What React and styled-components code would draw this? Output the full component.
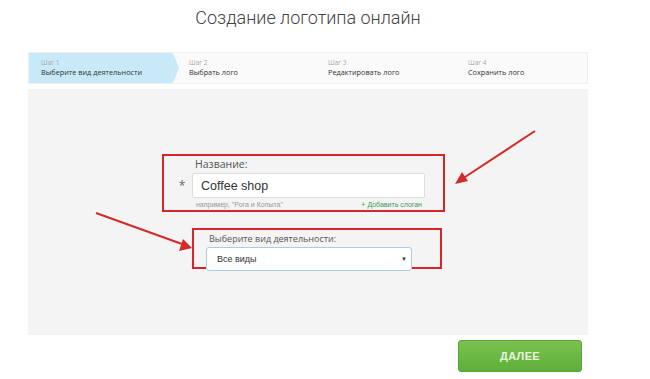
import React from "react";
import styled, { createGlobalStyle } from "styled-components";

const Global = createGlobalStyle`
  html, body { margin: 0; padding: 0; background: #fff; }
  body { font-family: "Open Sans", "Liberation Sans", Arial, sans-serif; color: #444; }
  * { box-sizing: border-box; }
`;

const Page = styled.div`
  position: relative;
  width: 650px;
  height: 379px;
  overflow: hidden;
`;

const Wrap = styled.div`
  width: 560px;
  margin-left: 28px;
  display: flex;
  flex-direction: column;
`;

const Title = styled.h1`
  margin: 7px 0 0;
  height: 45px;
  text-align: center;
  font-family: Roboto, "Open Sans", sans-serif;
  font-weight: 300;
  font-size: 18px;
  color: #444;
`;

const Steps = styled.div`
  display: grid;
  grid-template-columns: 144px 143px 140px 1fr;
  height: 32px;
  background: #fafafa;
  border: 1px solid #f0f0f0;
`;

const Step = styled.div`
  position: relative;
  padding: 6px 0 0 ${(p) => p.$pad}px;
  background: ${(p) => (p.$active ? "#c8eaf8" : "transparent")};
  ${(p) =>
    p.$active &&
    `
    &::after {
      content: "";
      position: absolute;
      right: -6px;
      top: 0;
      border-top: 15px solid transparent;
      border-bottom: 15px solid transparent;
      border-left: 6px solid #c8eaf8;
    }
  `}
`;

const StepNum = styled.div`
  font-size: 6.5px;
  color: #a8a8a8;
  line-height: 8px;
`;

const StepLabel = styled.div`
  font-size: 7.3px;
  color: #333;
  line-height: 11px;
  white-space: nowrap;
`;

const Panel = styled.div`
  margin-top: 5px;
  height: 246px;
  background: #f4f4f4;
  display: flex;
  flex-direction: column;
  padding-top: 65px;
`;

const RedBox = styled.div`
  border: 2px solid #d6262c;
  margin-left: ${(p) => p.$left}px;
  width: ${(p) => p.$w}px;
  height: ${(p) => p.$h}px;
  margin-top: ${(p) => p.$top || 0}px;
`;

const FieldLabel = styled.div`
  font-size: ${(p) => p.$fs}px;
  color: #555;
  line-height: 11px;
  margin: ${(p) => p.$m};
`;

const InputRow = styled.div`
  display: flex;
  align-items: center;
  margin-top: 3px;
`;

const Star = styled.span`
  width: 28px;
  text-align: center;
  padding-left: 8px;
  font-size: 12px;
  color: #666;
`;

const Input = styled.div`
  width: 233px;
  height: 25px;
  background: #fff;
  border: 1px solid #ddd;
  border-radius: 2px;
  display: flex;
  align-items: center;
  padding-left: 8px;
  font-family: "Liberation Sans", Arial, sans-serif;
  font-size: 12.5px;
  color: #333;
`;

const Hints = styled.div`
  display: flex;
  justify-content: space-between;
  width: 226px;
  margin: 3px 0 0 32px;
  font-family: "Liberation Sans", Arial, sans-serif;
  font-size: 7px;
  color: #999;
`;

const Green = styled.span`
  color: #3a9a5c;
`;

const Select = styled.div`
  margin: 3px 0 0 12px;
  width: 206px;
  height: 24px;
  background: #fff;
  border: 1px solid #a8cde6;
  border-radius: 3px;
  display: flex;
  align-items: center;
  justify-content: space-between;
  padding: 0 4px 0 10px;
  font-family: "Liberation Sans", Arial, sans-serif;
  font-size: 9px;
  color: #333;
`;

const Caret = styled.span`
  font-size: 6px;
  color: #333;
`;

const ButtonRow = styled.div`
  display: flex;
  justify-content: flex-end;
  padding-right: 6px;
  margin-top: 5px;
`;

const Button = styled.button`
  width: 124px;
  height: 32px;
  border: 1px solid #5aa53a;
  border-radius: 3px;
  background: linear-gradient(#79c150, #5fae3a);
  color: #e8f5df;
  font-family: "Liberation Sans", Arial, sans-serif;
  font-size: 11px;
  font-weight: 700;
  letter-spacing: 0.3px;
`;

const Overlay = styled.svg`
  position: absolute;
  left: 0;
  top: 0;
  pointer-events: none;
`;

export default function App() {
  const steps = [
    ["Шаг 1", "Выберите вид деятельности", 12],
    ["Шаг 2", "Выбрать лого", 16],
    ["Шаг 3", "Редактировать лого", 12],
    ["Шаг 4", "Сохранить лого", 12],
  ];
  return (
    <Page>
      <Global />
      <Wrap>
        <Title>Создание логотипа онлайн</Title>
        <Steps>
          {steps.map(([n, l, pad], i) => (
            <Step key={n} $active={i === 0} $pad={pad}>
              <StepNum>{n}</StepNum>
              <StepLabel>{l}</StepLabel>
            </Step>
          ))}
        </Steps>
        <Panel>
          <RedBox $left={134} $w={283} $h={58}>
            <FieldLabel $fs={10.5} $m="3px 0 0 31px">Название:</FieldLabel>
            <InputRow>
              <Star>*</Star>
              <Input>Coffee shop</Input>
            </InputRow>
            <Hints>
              <span>например, "Рога и Копыта"</span>
              <Green>+ Добавить слоган</Green>
            </Hints>
          </RedBox>
          <RedBox $left={164} $w={250} $h={41} $top={16}>
            <FieldLabel $fs={9} $m="3px 0 0 15px">Выберите вид деятельности:</FieldLabel>
            <Select>
              <span>Все виды</span>
              <Caret>▼</Caret>
            </Select>
          </RedBox>
        </Panel>
        <ButtonRow>
          <Button>ДАЛЕЕ</Button>
        </ButtonRow>
      </Wrap>
      <Overlay width="650" height="379" viewBox="0 0 650 379">
        <line x1="535" y1="131" x2="462" y2="179" stroke="#d42a2a" strokeWidth="2" />
        <path d="M455,184 L462,172 L468,181 z" fill="#d42a2a" />
        <line x1="96" y1="213" x2="182" y2="244" stroke="#d42a2a" strokeWidth="2" />
        <path d="M192,248 L179,251 L183,239 z" fill="#d42a2a" />
      </Overlay>
    </Page>
  );
}
